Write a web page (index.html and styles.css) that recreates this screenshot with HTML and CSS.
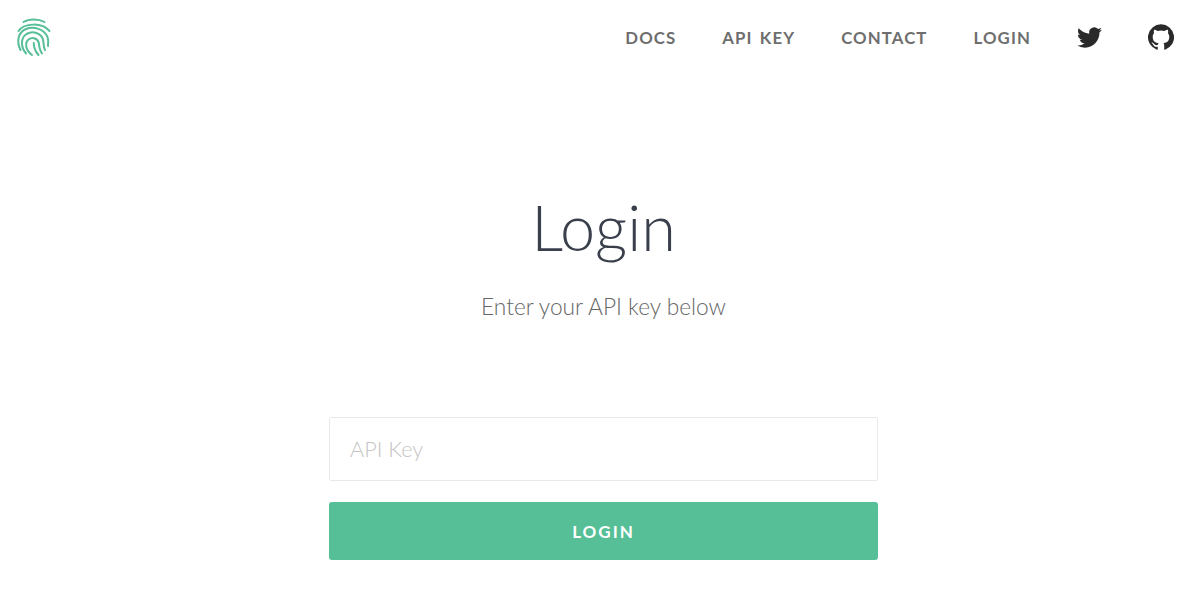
FILE: index.html
```html
<!DOCTYPE html>
<html>
<head>
    <title>Login</title>
    <link rel="stylesheet" href="styles.css">
</head>
<body>
    <header class="topbar">
        <a class="logo" href="#">
            <svg width="38" height="40" viewBox="0 0 38 40" fill="none" stroke="#57bf97" stroke-width="2" stroke-linecap="round">
                <path d="M8.500 5C14 1.600 23.500 1.600 29.500 5"/>
                <path d="M3.500 14C9 6 27 5 34.500 14"/>
                <path d="M5.500 33C1 24 3.500 15 11 12C19 9 29 12 32.500 20C33.500 23 33.500 26 33 29"/>
                <path d="M11 36.500C5.500 30 5.500 21 11.500 17C18 13.500 26 16 28 22.500C29 26 28 29 30 33"/>
                <path d="M17 38C10.500 33 9.500 26 13.500 22.500C17.500 19.500 23 21.500 23.800 26C24.300 30 24.500 33 27 36.500"/>
                <path d="M18.800 26C18.500 31 20.500 34.500 23.500 38"/>
            </svg>
        </a>
        <nav class="nav">
            <a href="#">DOCS</a>
            <a href="#">API KEY</a>
            <a href="#">CONTACT</a>
            <a href="#">LOGIN</a>
            <a class="icon" href="#">
                <svg width="25" height="25" viewBox="0 0 24 24" fill="#2a2a2a"><path d="M23.95 4.57a10 10 0 0 1-2.82.77 4.96 4.96 0 0 0 2.16-2.72c-.95.55-2 .95-3.12 1.18a4.92 4.92 0 0 0-8.38 4.48C7.69 8.09 4.07 6.13 1.64 3.16a4.82 4.82 0 0 0-.67 2.48c0 1.71.87 3.21 2.19 4.1a4.9 4.9 0 0 1-2.23-.61v.06a4.92 4.92 0 0 0 3.95 4.83 5 5 0 0 1-2.21.08 4.94 4.94 0 0 0 4.6 3.42A9.87 9.87 0 0 1 0 19.54a14 14 0 0 0 7.56 2.21c9.05 0 14-7.5 14-13.98 0-.21 0-.42-.02-.63a9.94 9.94 0 0 0 2.41-2.57z"/></svg>
            </a>
            <a class="icon" href="#">
                <svg width="26" height="26" viewBox="0 0 24 24" fill="#2a2a2a"><path d="M12 .3a12 12 0 0 0-3.79 23.39c.6.11.82-.26.82-.58v-2.03c-3.34.72-4.04-1.61-4.04-1.61-.55-1.39-1.33-1.76-1.33-1.76-1.09-.74.08-.73.08-.73 1.2.09 1.84 1.24 1.84 1.24 1.07 1.83 2.81 1.3 3.49 1 .11-.78.42-1.31.76-1.61-2.66-.3-5.47-1.33-5.47-5.93 0-1.31.47-2.38 1.24-3.22-.14-.3-.54-1.52.1-3.18 0 0 1-.32 3.3 1.23a11.5 11.5 0 0 1 6 0c2.28-1.55 3.29-1.23 3.29-1.23.64 1.66.24 2.88.12 3.18a4.65 4.65 0 0 1 1.23 3.22c0 4.61-2.8 5.62-5.48 5.92.42.36.81 1.1.81 2.22v3.29c0 .32.22.7.83.58A12 12 0 0 0 12 .3z"/></svg>
            </a>
        </nav>
    </header>

    <main class="login">
        <h1>Login</h1>
        <p class="sub">Enter your API key below</p>
        <form class="form">
            <input class="key" type="text" placeholder="API Key">
            <button class="btn" type="button">LOGIN</button>
        </form>
    </main>
</body>
</html>
```

FILE: styles.css
```css
body { margin: 0; background: #fff; font-family: Lato, sans-serif; color: #3a3f4c; }
a { text-decoration: none; color: inherit; }

.topbar { display: flex; justify-content: space-between; align-items: center; height: 74px; padding: 0 26px 0 15px; }
.logo { display: flex; }
.nav { display: flex; align-items: center; gap: 46px; color: #6e6e6e; font-size: 16.8px; font-weight: 700; letter-spacing: 1.1px; word-spacing: 2px; }
.nav .icon { display: flex; }

.login { display: flex; flex-direction: column; align-items: center; padding-left: 7px; }
h1 { margin: 110px 0 0; font-size: 63px; line-height: 86px; font-weight: 300; color: #3a3f4c; }
.sub { margin: 21px 0 0; font-size: 22.7px; line-height: 32px; font-weight: 300; color: #666; }

.form { display: flex; flex-direction: column; gap: 21px; width: 549px; margin-top: 94px; }
.key { box-sizing: border-box; height: 64px; padding: 0 20px; border: 1px solid #e9e9ec; border-radius: 2px; font-family: Lato, sans-serif; font-size: 21.7px; font-weight: 300; outline: none; }
.key::placeholder { color: #c4c4c4; }
.btn { height: 58px; border: 0; border-radius: 3px; background: #57bf97; color: #fff; font-family: Lato, sans-serif; font-size: 17px; font-weight: 700; letter-spacing: 2px; }
```
